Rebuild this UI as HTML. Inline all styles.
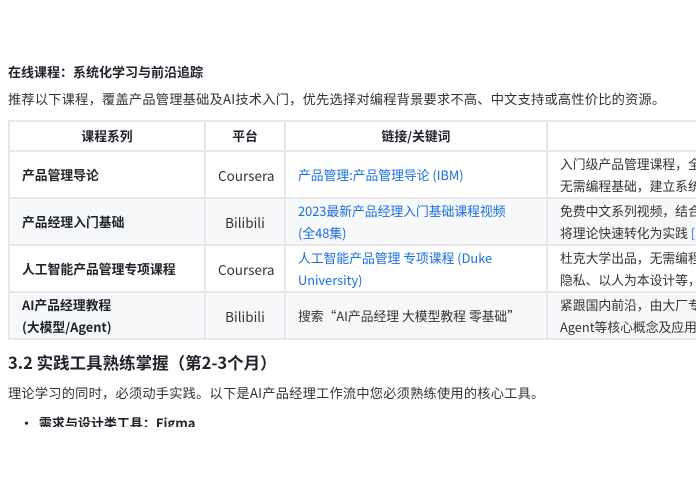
<!DOCTYPE html>
<html><head><meta charset="utf-8"><style>
*{margin:0;padding:0;box-sizing:border-box}
html,body{width:696px;height:480px;overflow:hidden;background:#fff}
body{font-family:"Noto Sans CJK SC","Liberation Sans",sans-serif;color:#1f2329;font-size:13px;position:relative}
.wrap{position:absolute;left:0;top:0;width:696px;height:480px;overflow:hidden}
.t{position:absolute;left:8px;white-space:nowrap}
table{position:absolute;left:8px;top:120px;border-collapse:collapse;table-layout:fixed;width:800px}
td,th{border:2px solid #e6e8eb;padding:0 12px;line-height:22px;vertical-align:middle;font-size:12.8px;white-space:nowrap;overflow:hidden}
th{height:30px;font-weight:bold;text-align:center;color:#1f2329}
tr.g td{background:#f7f8fa}
td.c1{font-weight:bold;padding-left:12px}
td.c2{text-align:center;color:#333;font-size:13.5px}
a{color:#1a6fe0;text-decoration:none}
.clip{position:absolute;left:0;top:400px;width:696px;height:27px;overflow:hidden}
</style></head><body><div class="wrap">
<div class="t" style="top:63px;font-weight:bold;font-size:13px;line-height:18px">在线课程：系统化学习与前沿追踪</div>
<div class="t" style="top:90px;line-height:18px;color:#333;font-size:13.2px;letter-spacing:0.25px">推荐以下课程，覆盖产品管理基础及AI技术入门，优先选择对编程背景要求不高、中文支持或高性价比的资源。</div>
<table>
<colgroup><col style="width:196px"><col style="width:80px"><col style="width:262px"><col style="width:262px"></colgroup>
<tr><th>课程系列</th><th>平台</th><th>链接/关键词</th><th></th></tr>
<tr style="height:47px"><td class="c1">产品管理导论</td><td class="c2">Coursera</td><td><a>产品管理:产品管理导论 (IBM)</a></td><td style="color:#333">入门级产品管理课程，全面介绍<br>无需编程基础，建立系统认知。</td></tr>
<tr class="g" style="height:47px"><td class="c1">产品经理入门基础</td><td class="c2">Bilibili</td><td><a>2023最新产品经理入门基础课程视频<br>(全48集)</a></td><td style="color:#333">免费中文系列视频，结合案例，<br>将理论快速转化为实践 <a>[1]</a></td></tr>
<tr style="height:47px"><td class="c1">人工智能产品管理专项课程</td><td class="c2">Coursera</td><td><a>人工智能产品管理 专项课程 (Duke<br>University)</a></td><td style="color:#333">杜克大学出品，无需编程背景，<br>隐私、以人为本设计等，</td></tr>
<tr class="g" style="height:47px"><td class="c1">AI产品经理教程<br>(大模型/Agent)</td><td class="c2">Bilibili</td><td style="color:#333">搜索“AI产品经理 大模型教程 零基础”</td><td style="color:#333">紧跟国内前沿，由大厂专家讲解<br>Agent等核心概念及应用。</td></tr>
</table>
<div class="t" style="top:351px;font-weight:bold;font-size:16.5px;line-height:22px">3.2 实践工具熟练掌握（第2-3个月）</div>
<div class="t" style="top:384px;line-height:18px;color:#333;font-size:13.2px;letter-spacing:0.25px">理论学习的同时，必须动手实践。以下是AI产品经理工作流中您必须熟练使用的核心工具。</div>
<div class="clip"><div class="t" style="left:20px;top:14px;font-weight:bold;line-height:18px">• &nbsp;需求与设计类工具：Figma</div></div>
</div></body></html>
